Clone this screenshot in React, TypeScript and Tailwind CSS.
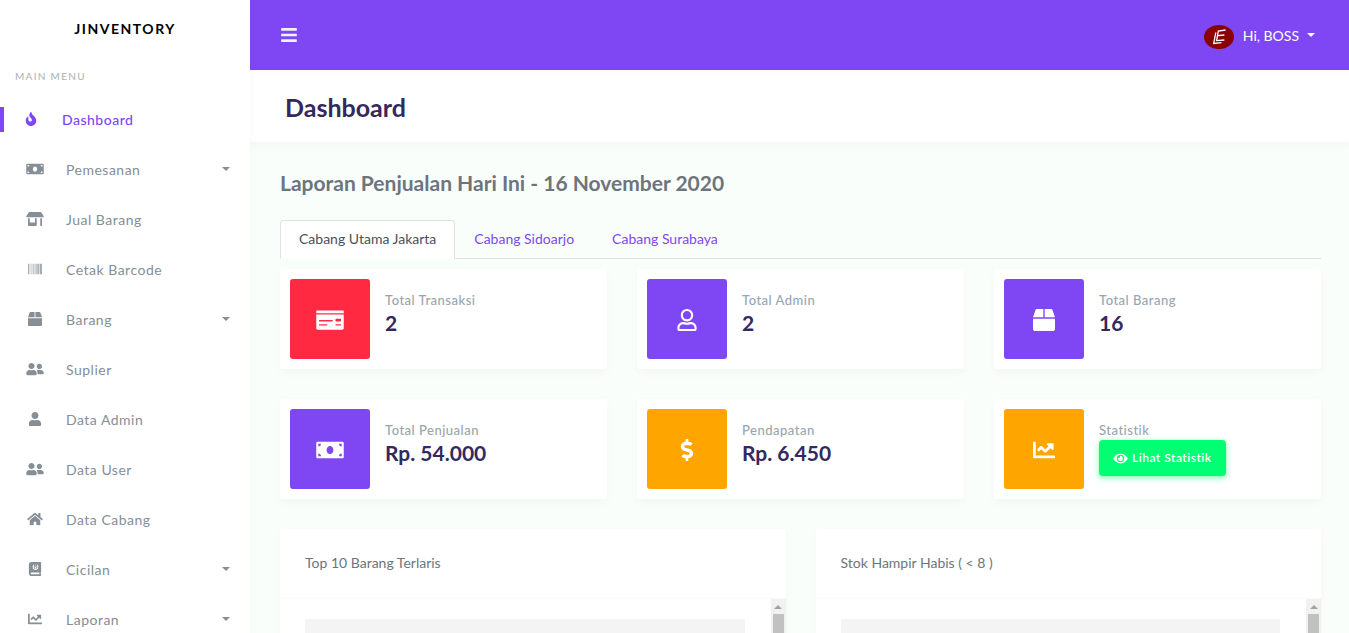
import React from "react";
import {
  FaBarcode,
  FaBars,
  FaBox,
  FaChartLine,
  FaDollarSign,
  FaEye,
  FaFire,
  FaHome,
  FaJournalWhills,
  FaMoneyBill,
  FaMoneyCheck,
  FaRegUser,
  FaStoreAlt,
  FaUser,
  FaUserFriends,
} from "react-icons/fa";
import type { IconType } from "react-icons";

type MenuItem = { label: string; icon: IconType; active?: boolean; dropdown?: boolean };

const menu: MenuItem[] = [
  { label: "Dashboard", icon: FaFire, active: true },
  { label: "Pemesanan", icon: FaMoneyBill, dropdown: true },
  { label: "Jual Barang", icon: FaStoreAlt },
  { label: "Cetak Barcode", icon: FaBarcode },
  { label: "Barang", icon: FaBox, dropdown: true },
  { label: "Suplier", icon: FaUserFriends },
  { label: "Data Admin", icon: FaUser },
  { label: "Data User", icon: FaUserFriends },
  { label: "Data Cabang", icon: FaHome },
  { label: "Cicilan", icon: FaJournalWhills, dropdown: true },
  { label: "Laporan", icon: FaChartLine, dropdown: true },
];

type Stat = { label: string; value?: string; icon: IconType; color: string };

const stats: Stat[] = [
  { label: "Total Transaksi", value: "2", icon: FaMoneyCheck, color: "bg-[#ff2a42]" },
  { label: "Total Admin", value: "2", icon: FaRegUser, color: "bg-[#7e47f3]" },
  { label: "Total Barang", value: "16", icon: FaBox, color: "bg-[#7e47f3]" },
  { label: "Total Penjualan", value: "Rp. 54.000", icon: FaMoneyBill, color: "bg-[#7e47f3]" },
  { label: "Pendapatan", value: "Rp. 6.450", icon: FaDollarSign, color: "bg-[#ffa500]" },
  { label: "Statistik", icon: FaChartLine, color: "bg-[#ffa500]" },
];

const branches = ["Cabang Utama Jakarta", "Cabang Sidoarjo", "Cabang Surabaya"];

function Caret() {
  return (
    <span
      aria-hidden="true"
      className="block h-0 w-0 border-x-4 border-t-4 border-x-transparent border-t-current"
    />
  );
}

function Sidebar() {
  return (
    <aside className="z-10 w-[250px] shrink-0 overflow-hidden bg-white shadow-[0_4px_8px_rgba(0,0,0,0.03)]">
      <a
        href="#"
        className="block h-[60px] text-center text-sm leading-[58px] font-bold tracking-[1.5px] text-black"
      >
        JINVENTORY
      </a>
      <div className="px-[15px] pt-1.5 pb-2 text-[10px] leading-5 tracking-[1.3px] text-[#a9b0b6]">
        MAIN MENU
      </div>
      <nav>
        <ul>
          {menu.map(({ label, icon: Icon, active, dropdown }) => (
            <li key={label}>
              <a
                href="#"
                className={
                  active
                    ? "flex h-[50px] items-center font-medium text-[#7e47f3]"
                    : "flex h-[50px] items-center pr-5 pl-[21px] text-[#868e96]"
                }
              >
                {active && <span className="mr-[13px] h-[25px] w-1 bg-[#7e47f3]" />}
                <Icon className="mr-[17px] h-[14px] w-7" />
                <span className="flex-1 pt-0.5 text-sm tracking-[0.5px]">{label}</span>
                {dropdown && <Caret />}
              </a>
            </li>
          ))}
        </ul>
      </nav>
    </aside>
  );
}

function Avatar() {
  return (
    <svg viewBox="0 0 30 24" className="h-6 w-[30px]" role="img" aria-label="Avatar">
      <ellipse cx="15" cy="12" rx="15" ry="12" fill="#8b0000" />
      <g fill="none" stroke="#fff" strokeWidth="1.3">
        <path d="M11.8 7.5 9.7 18.4 17.5 17.6" />
        <path d="M21.6 5 14.3 6 12.6 15.6 20.4 15" />
        <path d="M13.6 10.6 20.4 10" />
      </g>
    </svg>
  );
}

function Topbar() {
  return (
    <header className="flex h-[70px] items-center justify-between bg-[#7e47f3] pr-[34px] pl-[30px] text-white">
      <button type="button" aria-label="Menu">
        <FaBars className="h-[18px] w-[18px] text-[#f2f2f2]" />
      </button>
      <button type="button" className="flex items-center pt-1 text-sm">
        <Avatar />
        <span className="mx-2 pb-0.5 pl-px">Hi, BOSS</span>
        <span className="pb-1">
          <Caret />
        </span>
      </button>
    </header>
  );
}

function StatCard({ label, value, icon: Icon, color }: Stat) {
  return (
    <article className="flex h-[100px] rounded-[3px] bg-white p-2.5 shadow-[0_4px_8px_rgba(0,0,0,0.03)]">
      <div className={`flex size-20 shrink-0 items-center justify-center rounded-[3px] pt-0.5 text-white ${color}`}>
        <Icon className="h-[22px] w-8" />
      </div>
      <div className="pt-[11px] pl-[15px]">
        <h4 className="text-[13px] leading-5 font-medium tracking-[0.5px] text-[#98a6ad]">{label}</h4>
        {value ? (
          <div className="text-[21px] leading-[26px] font-bold text-[#34295e]">{value}</div>
        ) : (
          <a
            href="#"
            className="flex h-9 items-center gap-1 rounded bg-[#00ff72] px-3.5 text-xs font-semibold tracking-[0.5px] text-white shadow-[0_2px_6px_#7dffb5]"
          >
            <FaEye className="h-[13px] w-[15px]" />
            Lihat Statistik
          </a>
        )}
      </div>
    </article>
  );
}

function ListCard({ title }: { title: string }) {
  return (
    <article className="rounded-[3px] bg-white shadow-[0_4px_8px_rgba(0,0,0,0.03)]">
      <h4 className="flex h-[70px] items-center border-b border-[#f9f9f9] px-[25px] pb-0.5 text-sm text-[#6c757d]">
        {title}
      </h4>
      <div className="flex h-[300px]">
        <div className="flex-1 pt-5 pr-[26px] pl-[25px]">
          <div className="h-[60px] bg-[#f4f4f4]" />
        </div>
        <div aria-hidden="true" className="flex w-[15px] flex-col items-center bg-[#f1f1f1]">
          <div className="flex h-[15px] items-center">
            <span className="block h-0 w-0 border-x-4 border-b-4 border-x-transparent border-b-[#a3a3a3]" />
          </div>
          <div className="h-[120px] w-[11px] bg-[#c1c1c1]" />
        </div>
      </div>
    </article>
  );
}

export default function App() {
  return (
    <div className="flex h-screen overflow-hidden bg-[#fafefa] font-[Lato,sans-serif] text-[#6c757d]">
      <Sidebar />
      <div className="min-w-0 flex-1">
        <Topbar />
        <div className="flex h-[72px] items-center bg-white px-[35px] pt-0.5 shadow-[0_4px_8px_rgba(0,0,0,0.03)]">
          <h1 className="text-[25px] leading-8 font-bold text-[#34295e]">Dashboard</h1>
        </div>
        <main className="pt-[25px] pr-7 pl-[30px]">
          <h2 className="text-[21px] leading-8 font-bold">Laporan Penjualan Hari Ini - 16 November 2020</h2>
          <div role="tablist" className="mt-[21px] mb-2.5 flex border-b border-[#dee2e6]">
            {branches.map((name, i) => (
              <button
                key={name}
                type="button"
                role="tab"
                aria-selected={i === 0}
                className={
                  i === 0
                    ? "-mb-px rounded-t border border-[#dee2e6] border-b-white bg-white px-[18px] pt-[7px] pb-[9px] text-sm leading-[21px] text-[#495057]"
                    : "-mb-px border border-transparent px-[18px] pt-[7px] pb-[9px] text-sm leading-[21px] text-[#7e47f3]"
                }
              >
                {name}
              </button>
            ))}
          </div>
          <section className="grid grid-cols-3 gap-[30px]">
            {stats.map((stat) => (
              <StatCard key={stat.label} {...stat} />
            ))}
          </section>
          <section className="mt-[30px] grid grid-cols-2 gap-[30px]">
            <ListCard title="Top 10 Barang Terlaris" />
            <ListCard title="Stok Hampir Habis ( < 8 )" />
          </section>
        </main>
      </div>
    </div>
  );
}
